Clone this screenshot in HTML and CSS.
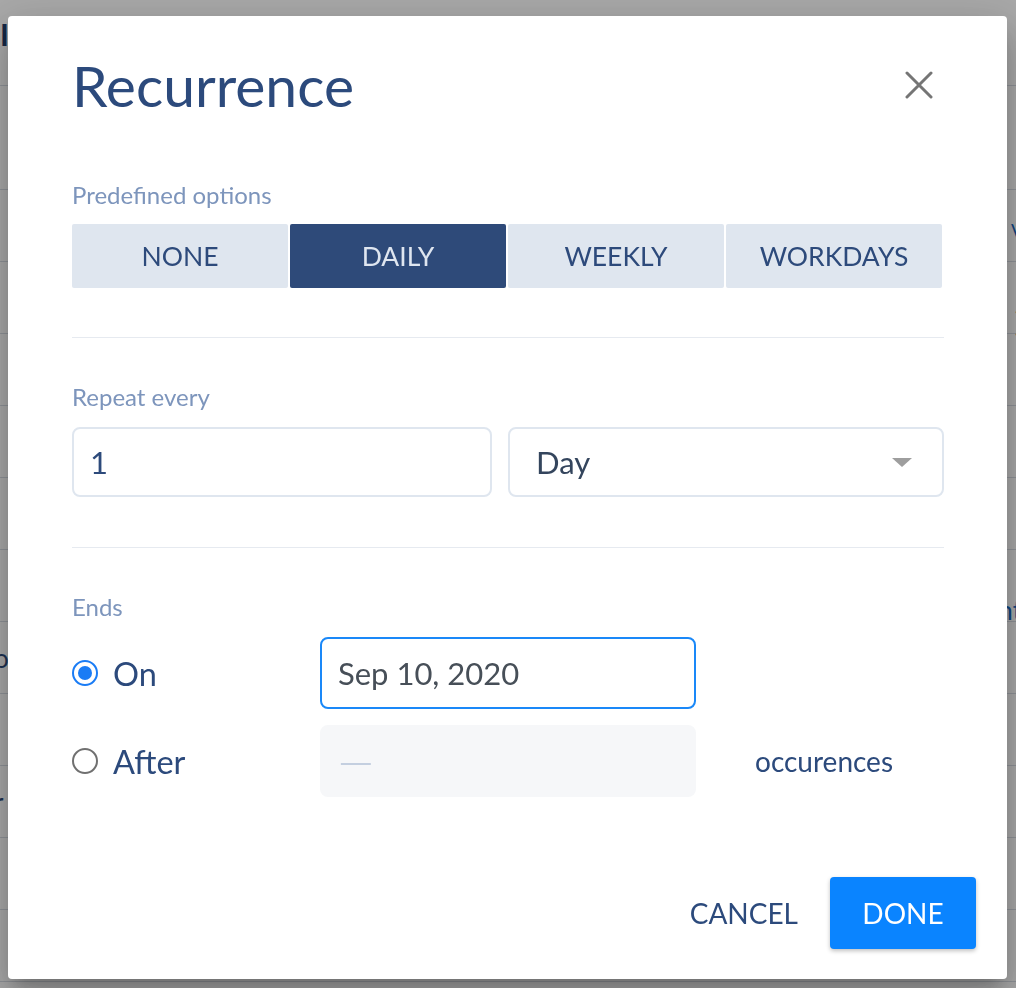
FILE: index.html
```html
<!DOCTYPE html>
<html lang="en">
<head>
    <meta charset="UTF-8">
    <title>Recurrence</title>
    <link rel="stylesheet" href="styles.css">
</head>
<body>
    <div class="page">
        <div class="page-head"><span class="page-title">Il</span></div>
        <div class="page-row first"></div>
        <div class="page-row"><span class="mark blue slash">\</span></div>
        <div class="page-row"><span class="mark red">)</span></div>
        <div class="page-row"></div>
        <div class="page-row"></div>
        <div class="page-row"></div>
        <div class="page-row"><span class="mark blue">nt</span></div>
        <div class="page-row"><span class="frag">o</span></div>
        <div class="page-row"></div>
        <div class="page-row"><span class="frag">r</span></div>
        <div class="page-row"></div>
        <div class="page-row"></div>
    </div>

    <div class="backdrop">
        <div class="dialog">
            <div class="dialog-head">
                <h1>Recurrence</h1>
                <button class="close" aria-label="Close">
                    <svg width="28" height="28" viewBox="0 0 28 28">
                        <path d="M2 2 L26 26 M26 2 L2 26" stroke="#757575" stroke-width="3" stroke-linecap="round" fill="none"/>
                    </svg>
                </button>
            </div>

            <div class="field-label">Predefined options</div>
            <div class="presets">
                <button class="preset">NONE</button>
                <button class="preset active">DAILY</button>
                <button class="preset">WEEKLY</button>
                <button class="preset">WORKDAYS</button>
            </div>

            <hr class="divider">

            <div class="field-label">Repeat every</div>
            <div class="repeat">
                <div class="input number">1</div>
                <div class="input select">Day<span class="caret"></span></div>
            </div>

            <hr class="divider">

            <div class="field-label">Ends</div>
            <div class="ends">
                <label class="radio checked"><span class="radio-circle"></span>On</label>
                <div class="input date focused">Sep 10, 2020</div>
                <span></span>
                <label class="radio"><span class="radio-circle"></span>After</label>
                <div class="input date disabled"><span class="dash">—</span></div>
                <span class="unit">occurences</span>
            </div>

            <div class="actions">
                <button class="btn-text">CANCEL</button>
                <button class="btn-primary">DONE</button>
            </div>
        </div>
    </div>
</body>
</html>
```

FILE: styles.css
```css
* {
    box-sizing: border-box;
}
body {
    margin: 0;
    font-family: Lato, "Open Sans", sans-serif;
    background: #ffffff;
    overflow: hidden;
}
button {
    font-family: inherit;
    border: none;
    background: none;
    cursor: pointer;
    padding: 0;
}

/* page behind the dialog */
.page {
    height: 988px;
}
.page-head {
    height: 86px;
    border-bottom: 1px solid #d8dde5;
    padding-top: 16px;
}
.page-title {
    font-size: 30px;
    font-weight: 700;
    color: #1f3a68;
}
.page-row {
    height: 72px;
    border-bottom: 1px solid #d8dde5;
    position: relative;
}
.page-row.first {
    height: 104px;
}
.frag {
    font-size: 26px;
    color: #2c4a7c;
    margin-left: -6px;
    line-height: 72px;
}
.mark {
    position: absolute;
    right: -6px;
    top: 44px;
    font-size: 26px;
}
.mark.slash {
    top: 28px;
}
.mark.blue {
    color: #1565c0;
}
.mark.red {
    color: #c62828;
}

/* modal */
.backdrop {
    position: fixed;
    inset: 0;
    background: rgba(0, 0, 0, 0.34);
    padding: 16px 9px 9px 8px;
}
.dialog {
    height: 100%;
    background: #ffffff;
    border-radius: 4px;
    padding: 35px 63px 0 64px;
    display: flex;
    flex-direction: column;
    box-shadow: 0 11px 15px -7px rgba(0, 0, 0, 0.2),
                0 24px 38px 3px rgba(0, 0, 0, 0.14),
                0 9px 46px 8px rgba(0, 0, 0, 0.12);
}
.dialog-head {
    display: flex;
    justify-content: space-between;
    align-items: center;
}
h1 {
    margin: 0;
    font-size: 57px;
    line-height: 68px;
    font-weight: 400;
    color: #2c4a7c;
}
.close {
    width: 50px;
    height: 50px;
    display: flex;
    align-items: center;
    justify-content: center;
}

.field-label {
    font-size: 24px;
    line-height: 28px;
    color: #7d95bc;
}
.dialog-head + .field-label {
    margin-top: 62px;
}
.divider + .field-label {
    margin-top: 45px;
}

.presets {
    display: grid;
    grid-template-columns: repeat(4, 1fr);
    gap: 2px;
    margin: 15px 2px 0 0;
}
.preset {
    height: 64px;
    background: #dfe6ef;
    color: #2d4a7b;
    font-size: 26.5px;
    border-radius: 2px;
}
.preset.active {
    background: #2e4a79;
    color: #dfe6f0;
}

.divider {
    border: none;
    border-top: 1px solid #e6eaf0;
    margin: 49px 0 0;
}
.repeat + .divider {
    margin-top: 50px;
}

.repeat {
    display: grid;
    grid-template-columns: 420px 1fr;
    gap: 16px;
    margin-top: 16px;
}
.input {
    height: 70px;
    border: 2px solid #dfe6ef;
    border-radius: 8px;
    display: flex;
    align-items: center;
    padding-left: 16px;
    font-size: 31px;
    color: #2d4a7b;
}
.select {
    padding-left: 26px;
    padding-right: 30px;
    color: #34455d;
    justify-content: space-between;
}
.caret {
    width: 0;
    height: 0;
    border-left: 10px solid transparent;
    border-right: 10px solid transparent;
    border-top: 9px solid #9e9e9e;
}

.ends {
    display: grid;
    grid-template-columns: 248px 376px auto;
    row-gap: 16px;
    align-items: center;
    margin-top: 16px;
}
.radio {
    display: flex;
    align-items: center;
    gap: 15px;
    font-size: 32.5px;
    color: #2c4a7c;
}
.radio-circle {
    width: 26px;
    height: 26px;
    border-radius: 50%;
    border: 2px solid #707070;
    display: flex;
    align-items: center;
    justify-content: center;
}
.radio.checked .radio-circle {
    border-color: #1a7cf5;
}
.radio.checked .radio-circle::after {
    content: "";
    width: 14px;
    height: 14px;
    border-radius: 50%;
    background: #1a7cf5;
}
.date {
    height: 72px;
    color: #474f58;
}
.date.focused {
    border-color: #1a88f8;
}
.date.disabled {
    border-color: #f6f7f9;
    background: #f6f7f9;
}
.dash {
    display: inline-block;
    color: #c4cfe0;
    font-size: 30px;
    transform: scaleX(1.5);
    transform-origin: left center;
}
.unit {
    margin-left: 59px;
    font-size: 28px;
    color: #2c4a7c;
}

.actions {
    display: flex;
    justify-content: flex-end;
    align-items: center;
    gap: 32px;
    margin: 80px -32px 0 0;
}
.btn-text {
    font-size: 28px;
    color: #2c4a7c;
}
.btn-primary {
    width: 146px;
    height: 72px;
    background: #0a84ff;
    color: #ffffff;
    font-size: 28px;
    border-radius: 4px;
    box-shadow: 0 2px 4px rgba(0, 0, 0, 0.25);
}
```
